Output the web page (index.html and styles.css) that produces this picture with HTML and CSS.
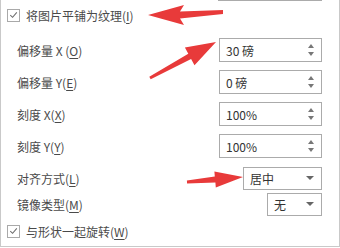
FILE: index.html
```html
<!DOCTYPE html>
<html lang="zh-CN">
<head>
  <meta charset="UTF-8" />
  <title>填充</title>
  <link rel="stylesheet" href="styles.css">
</head>
<body>
  <div class="panel">
    <div class="top-strip"><div class="prev-edge"></div></div>

    <div class="row check-row first">
      <span class="checkbox"><svg viewBox="0 0 12 12" width="12" height="12"><path d="M2.5 6.2 L5 8.6 L9.6 3.2" fill="none" stroke="#6a6a6a" stroke-width="1.1"/></svg></span>
      <span class="label">将图片平铺为纹理(<u>I</u>)</span>
    </div>

    <div class="row field-row r2">
      <span class="label indent">偏移量 X (<u>O</u>)</span>
      <div class="spin"><span>30 磅</span><i class="arrows"></i></div>
    </div>

    <div class="row field-row r3">
      <span class="label indent">偏移量 Y(<u>E</u>)</span>
      <div class="spin"><span>0 磅</span><i class="arrows"></i></div>
    </div>

    <div class="row field-row r4">
      <span class="label indent">刻度 X(<u>X</u>)</span>
      <div class="spin"><span>100%</span><i class="arrows"></i></div>
    </div>

    <div class="row field-row r5">
      <span class="label indent">刻度 Y(<u>Y</u>)</span>
      <div class="spin"><span>100%</span><i class="arrows"></i></div>
    </div>

    <div class="row field-row r6">
      <span class="label indent">对齐方式(<u>L</u>)</span>
      <div class="select wide"><span>居中</span><i class="caret"></i></div>
    </div>

    <div class="row field-row r7">
      <span class="label indent">镜像类型(<u>M</u>)</span>
      <div class="select narrow"><span>无</span><i class="caret"></i></div>
    </div>

    <div class="row check-row r8">
      <span class="checkbox"><svg viewBox="0 0 12 12" width="12" height="12"><path d="M2.5 6.2 L5 8.6 L9.6 3.2" fill="none" stroke="#6a6a6a" stroke-width="1.1"/></svg></span>
      <span class="label">与形状一起旋转(<u>W</u>)</span>
    </div>

    <!-- red annotation arrows drawn over the dialog -->
    <svg class="marks" width="340" height="248" viewBox="0 0 340 248">
      <path d="M148 15 L184 5 L180 11.5 L223 10 L223 14 L180 18.5 L184 25 Z" fill="#e83a3a"/>
      <path d="M216 42 L194.5 65.2 L191.1 59 L150.7 79.3 L149.3 76.7 L188.3 53.8 L184.9 47.6 Z" fill="#e83a3a"/>
      <path d="M243 177 L215.8 187.5 L215.4 182.5 L187.1 183.5 L186.9 180.5 L214.8 176.5 L214.4 171.5 Z" fill="#e83a3a"/>
    </svg>
  </div>
</body>
</html>
```

FILE: styles.css
```css
* {
  box-sizing: border-box;
}

body {
  margin: 0;
  background: #fff;
  font-family: "Noto Sans CJK SC", "Liberation Sans", sans-serif;
  font-size: 12px;
  color: #4a4a4a;
}

.panel {
  position: relative;
  width: 340px;
  height: 247px;
  border-left: 1px solid #c9c9c9;
  border-right: 1px solid #c9c9c9;
  border-bottom: 1px solid #c9c9c9;
  display: flex;
  flex-direction: column;
}

.top-strip {
  height: 1px;
  display: flex;
  justify-content: flex-end;
  padding-right: 17px;
}

.prev-edge {
  width: 104px;
  border-top: 1px solid #ababab;
}

.row {
  display: flex;
  align-items: center;
  height: 24px;
}

.field-row {
  justify-content: space-between;
  padding-right: 17px;
}

.first { margin-top: 2px; }
.r2 { margin-top: 11px; }
.r3 { margin-top: 8px; }
.r4 { margin-top: 8px; }
.r5 { margin-top: 8px; }
.r6 { margin-top: 8px; }
.r7 { margin-top: 2px; }
.r8 { margin-top: 3px; }

.check-row {
  padding-left: 6px;
}

.checkbox {
  width: 13px;
  height: 13px;
  border: 1px solid #a9a9a9;
  display: flex;
  align-items: center;
  justify-content: center;
  margin-right: 6px;
}

.label u {
  text-underline-offset: 2px;
}

.indent {
  padding-left: 16px;
}

.spin,
.select {
  height: 24px;
  border: 1px solid #ababab;
  display: flex;
  align-items: center;
  justify-content: space-between;
  padding: 0 6px;
  color: #333;
}

.spin {
  width: 103px;
}

.select.wide {
  width: 79px;
  height: 23px;
}

.select.narrow {
  width: 55px;
  height: 23px;
}

.arrows {
  width: 7px;
  height: 14px;
  position: relative;
}

.arrows::before,
.arrows::after {
  content: "";
  position: absolute;
  left: 0;
  border-left: 3.5px solid transparent;
  border-right: 3.5px solid transparent;
}

.arrows::before {
  top: 1px;
  border-bottom: 4px solid #777;
}

.arrows::after {
  bottom: 1px;
  border-top: 4px solid #777;
}

.caret {
  width: 0;
  height: 0;
  border-left: 4px solid transparent;
  border-right: 4px solid transparent;
  border-top: 4px solid #666;
  margin-right: 1px;
}

.marks {
  position: absolute;
  left: -1px;
  top: 0;
  pointer-events: none;
}
```
